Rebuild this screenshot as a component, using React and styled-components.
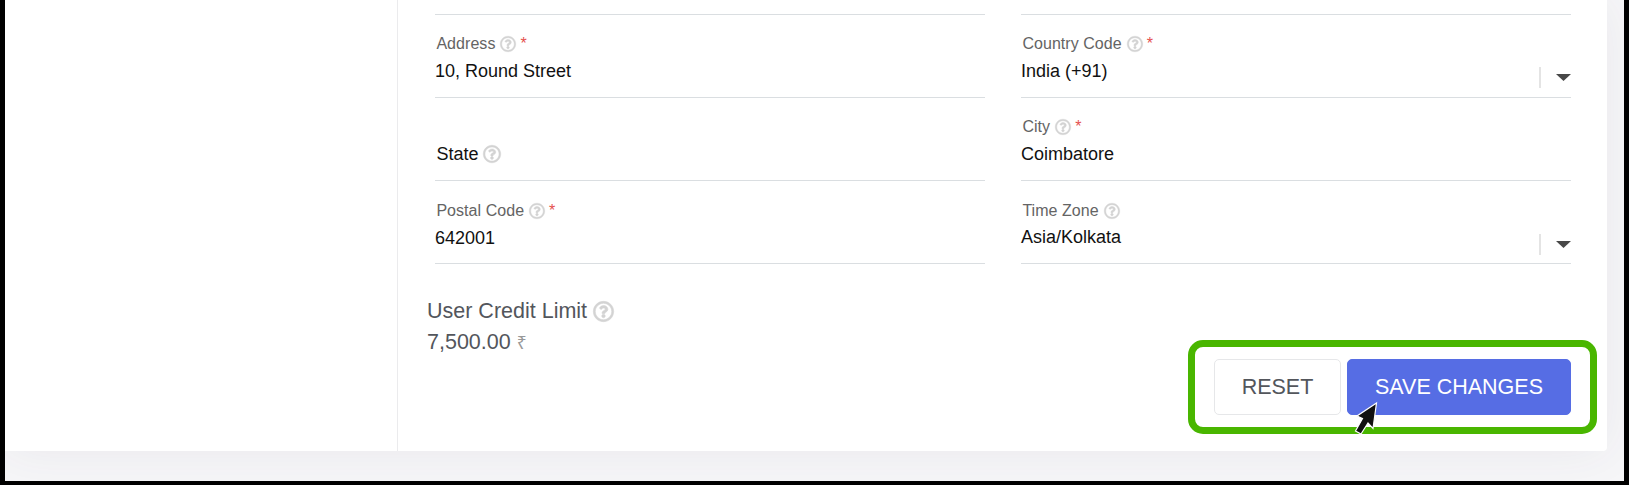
import React from "react";
import styled, { createGlobalStyle } from "styled-components";
import { FaRegQuestionCircle } from "react-icons/fa";

const GlobalStyle = createGlobalStyle`
  *, *::before, *::after { box-sizing: border-box; }
  body {
    margin: 0;
    background: #000;
    font-family: "Liberation Sans", Arial, Helvetica, sans-serif;
    overflow: hidden;
  }
`;

const Page = styled.div`
  height: 485px;
  padding: 0 5px 4px 5px;
  background: #000;
`;

const Backdrop = styled.div`
  height: 481px;
  padding-right: 17px;
  background: #f6f6f8;
  overflow: hidden;
`;

const Card = styled.main`
  display: flex;
  height: 451px;
  background: #fff;
  border-radius: 0 0 4px 0;
  box-shadow: 0 0 50px rgba(70, 60, 85, 0.07);
`;

const Sidebar = styled.aside`
  width: 393px;
  border-right: 1px solid #ebebed;
`;

const Content = styled.section`
  flex: 1;
  padding: 14px 36px 0 37px;
`;

const Form = styled.form`
  display: grid;
  grid-template-columns: 550px 550px;
  grid-auto-rows: 83px;
  column-gap: 36px;
`;

const TopRules = styled.div`
  display: grid;
  grid-template-columns: 550px 550px;
  column-gap: 36px;
`;

const Rule = styled.div`
  height: 1px;
  background: #dadee1;
`;

const Field = styled.div`
  display: flex;
  flex-direction: column;
  padding-top: ${(p) => p.$top ?? 19}px;
  border-bottom: 1px solid #dadee1;
`;

const Label = styled.label`
  display: flex;
  align-items: center;
  height: 20px;
  padding-left: 1.4px;
  font-size: 16px;
  letter-spacing: 0.05px;
  line-height: 20px;
  color: #646464;
`;

const InlineLabel = styled(Label)`
  height: 24px;
  margin-top: 25px;
  font-size: 18px;
  letter-spacing: 0;
  line-height: 24px;
  color: #111;
`;

const HelpIcon = styled(FaRegQuestionCircle)`
  width: ${(p) => p.$size}px;
  height: ${(p) => p.$size}px;
  margin-left: ${(p) => p.$gap ?? 5}px;
  color: #d3d3d3;
  stroke-width: 14px;
  overflow: visible;
  flex: none;
`;

const Required = styled.span`
  margin-left: 4px;
  color: #e5504e;
`;

const ValueRow = styled.div`
  display: flex;
  justify-content: space-between;
  margin-top: ${(p) => p.$gap ?? 5}px;
`;

const Value = styled.span`
  font-size: 18px;
  line-height: 24px;
  color: #111;
`;

const SelectTail = styled.span`
  display: flex;
  align-items: center;
  gap: 15px;
  height: 21px;
  margin-top: ${(p) => p.$top ?? 8}px;
`;

const Separator = styled.span`
  width: 2px;
  height: 21px;
  background: #e4e4e4;
`;

const Credit = styled.div`
  display: flex;
  flex-direction: column;
  margin: 32px 0 0 -8px;
  font-size: 21.5px;
  line-height: 31px;
  color: #53565c;
`;

const CreditLine = styled.div`
  display: flex;
  align-items: center;
  height: 31px;
`;

const Currency = styled.span`
  margin-left: 6px;
  font-family: "Noto Sans", "DejaVu Sans", sans-serif;
  font-size: 17.5px;
  color: #999;
`;

const Actions = styled.div`
  position: relative;
  display: flex;
  gap: 6px;
  width: 409px;
  height: 94px;
  margin: -18px -26px 0 auto;
  padding: 12px 19px;
  border: 7px solid #49b600;
  border-radius: 15px;
`;

const Button = styled.button`
  width: ${(p) => (p.$primary ? 224 : 127)}px;
  height: 56px;
  padding: 0;
  border: 1px solid ${(p) => (p.$primary ? "#566de4" : "#e6e7e9")};
  border-radius: 5px;
  background: ${(p) => (p.$primary ? "#566de4" : "#fff")};
  color: ${(p) => (p.$primary ? "#fff" : "#53565c")};
  font-family: inherit;
  font-size: 21.5px;
  flex: none;
`;

const Pointer = styled.svg`
  position: absolute;
  left: 159px;
  top: 54px;
  width: 26px;
  height: 36px;
`;

function Caret() {
  return (
    <svg width="15" height="7" viewBox="0 0 15 7" aria-hidden="true">
      <path d="M0 0H15L7.5 7Z" fill="#484848" />
    </svg>
  );
}

function FormField({ label, value, required, select, top, gap, tailTop }) {
  return (
    <Field $top={top}>
      <Label>
        {label}
        <HelpIcon $size={16} />
        {required && <Required>*</Required>}
      </Label>
      <ValueRow $gap={gap}>
        <Value>{value}</Value>
        {select && (
          <SelectTail $top={tailTop}>
            <Separator />
            <Caret />
          </SelectTail>
        )}
      </ValueRow>
    </Field>
  );
}

export default function App() {
  return (
    <Page>
      <GlobalStyle />
      <Backdrop>
        <Card>
          <Sidebar />
          <Content>
            <TopRules>
              <Rule />
              <Rule />
            </TopRules>
            <Form>
              <FormField label="Address" value="10, Round Street" required />
              <FormField label="Country Code" value="India (+91)" required select />
              <Field>
                <InlineLabel>
                  State
                  <HelpIcon $size={18} />
                </InlineLabel>
              </Field>
              <FormField label="City" value="Coimbatore" required />
              <FormField label="Postal Code" value="642001" required top={20} />
              <FormField label="Time Zone" value="Asia/Kolkata" select top={20} gap={4} tailTop={9} />
            </Form>
            <Credit>
              <CreditLine>
                User Credit Limit
                <HelpIcon $size={21} $gap={6} />
              </CreditLine>
              <CreditLine>
                7,500.00
                <Currency>₹</Currency>
              </CreditLine>
            </Credit>
            <Actions>
              <Button type="button">RESET</Button>
              <Button type="button" $primary>SAVE CHANGES</Button>
              <Pointer viewBox="0 0 26 36" aria-hidden="true">
                <path
                  d="M22.5 2L3 15L8.5 17.5L1.5 30L7 33L14 22L19 27.5Z"
                  fill="#111"
                  stroke="#fff"
                  strokeWidth="1.2"
                />
              </Pointer>
            </Actions>
          </Content>
        </Card>
      </Backdrop>
    </Page>
  );
}
